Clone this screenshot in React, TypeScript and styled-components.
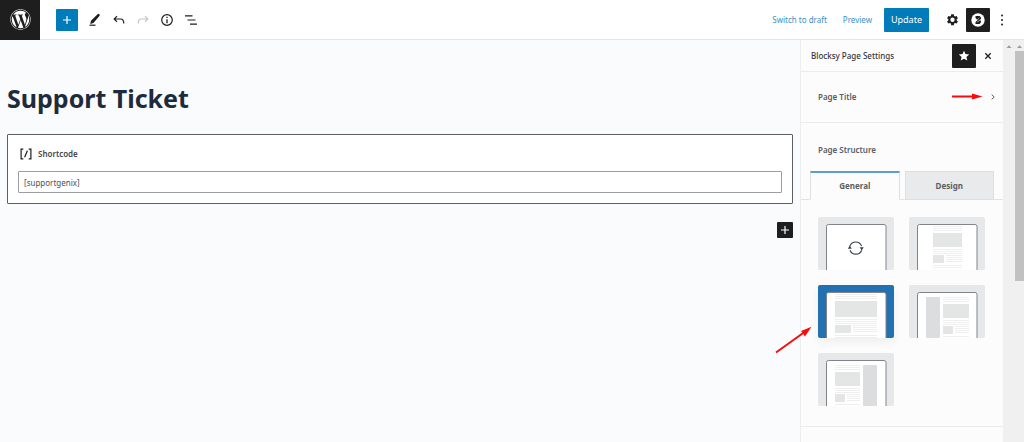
import React, { useState } from "react";
import styled, { createGlobalStyle, css } from "styled-components";
import { FaWordpress } from "react-icons/fa";

const Global = createGlobalStyle`
  * { box-sizing: border-box; }
  body {
    margin: 0;
    background: #fafbfd;
    color: #1e1e1e;
    font-family: "Noto Sans", "Open Sans", sans-serif;
    font-size: 8px;
    line-height: 12px;
  }
  button, input { font: inherit; color: inherit; margin: 0; }
  button { border: 0; padding: 0; background: none; cursor: pointer; }
  svg { display: block; }
`;

const Shell = styled.div`
  display: flex;
  flex-direction: column;
  height: 100vh;
  overflow: hidden;
`;

const TopBar = styled.header`
  display: flex;
  align-items: center;
  flex: none;
  height: 40px;
  padding-right: 10px;
  background: #fff;
  border-bottom: 1px solid #e4e6e9;
`;

const SiteLink = styled.a`
  display: grid;
  place-items: center;
  width: 40px;
  height: 40px;
  margin-right: 16px;
  background: #1e1e1e;
  color: #fff;
`;

const Tools = styled.div`
  display: flex;
  align-items: center;
  gap: 2px;
`;

const Actions = styled.div`
  display: flex;
  align-items: center;
  margin-left: auto;
`;

const IconButton = styled.button<{ $tone?: "blue" | "dark"; $size?: number }>`
  display: grid;
  place-items: center;
  flex: none;
  width: ${(p) => p.$size ?? 22}px;
  height: ${(p) => p.$size ?? 22}px;
  border-radius: 1px;
  color: #1e1e1e;
  ${(p) => p.$tone === "blue" && css`background: #007cba; color: #fff;`}
  ${(p) => p.$tone === "dark" && css`background: #1e1e1e; color: #fff;`}
  &:disabled { color: #c6c6c6; }
`;

const Inserter = styled(IconButton)`
  margin-right: 4px;
`;

const SettingsButton = styled(IconButton)`
  margin-right: 3px;
`;

const TextButton = styled.button`
  margin-right: 16px;
  color: #3d8fc2;
`;

const UpdateButton = styled.button`
  height: 24px;
  padding: 0 7px;
  margin: 0 12px 0 -4px;
  border-radius: 1px;
  background: #007cba;
  color: #fff;
  font-size: 9px;
`;

const Workspace = styled.div`
  display: flex;
  flex: 1;
  min-height: 0;
`;

const Canvas = styled.main`
  flex: 1;
  min-width: 0;
  padding: 39px 7px 0;
`;

const PostTitle = styled.h1`
  margin: 0 0 17px;
  color: #1e2b3c;
  font-size: 25px;
  line-height: 38px;
  font-weight: 700;
`;

const Block = styled.section`
  padding: 11px 10px 10px;
  border: 1px solid #5f6064;
  border-radius: 1px;
  background: #fff;
`;

const BlockLabel = styled.label`
  display: flex;
  align-items: center;
  gap: 6px;
  height: 15px;
  margin-bottom: 10px;
  padding-left: 2px;
  color: #44474c;
  font-weight: 600;
`;

const BlockInput = styled.input`
  display: block;
  width: 100%;
  height: 22px;
  padding: 1px 5px 0;
  border: 1px solid #9b9da0;
  border-radius: 1px;
  background: #fff;
  color: #4c4f54;
`;

const Appender = styled.div`
  display: flex;
  justify-content: flex-end;
  padding-top: 18px;
`;

const Panel = styled.aside`
  flex: none;
  width: 203px;
  background: #fcfcfc;
  border-left: 1px solid #eceef0;
  color: #595d63;
  font-weight: 600;
`;

const PanelHeader = styled.div`
  display: flex;
  align-items: center;
  height: 32px;
  padding: 0 9px 0 10px;
  border-bottom: 1px solid #e9ebec;
  color: #33363b;
  font-weight: 500;
`;

const PanelTitle = styled.h2`
  flex: 1;
  margin: 0;
  font-size: inherit;
  font-weight: inherit;
`;

const CloseButton = styled(IconButton)`
  margin-left: 6px;
`;

const OptionRow = styled.button`
  display: flex;
  align-items: center;
  justify-content: space-between;
  width: 100%;
  height: 51px;
  padding: 0 7px 1px 17px;
  border-bottom: 1px solid #e9ebec;
  font-weight: 600;
`;

const Heading = styled.h3`
  margin: 0;
  padding: 21px 17px 15px;
  font-size: inherit;
  font-weight: inherit;
`;

const Tabs = styled.div`
  display: flex;
  gap: 5px;
  padding: 0 9px;
  box-shadow: inset 0 -1px #e1e4e6;
`;

const Tab = styled.button<{ $active: boolean }>`
  flex: 1;
  height: 29px;
  border: 1px solid #dddfe1;
  background: #e8eaec;
  font-weight: 700;
  ${(p) =>
    p.$active &&
    css`
      border-top: 2px solid #5a9fce;
      border-bottom-color: #fcfcfc;
      background: #fcfcfc;
    `}
`;

const Layouts = styled.fieldset`
  display: grid;
  grid-template-columns: 76px 76px;
  gap: 15px;
  margin: 0;
  padding: 17px 17px 20px;
  border: 0;
  border-bottom: 1px solid #e9ebec;
`;

const LayoutTile = styled.label<{ $selected: boolean }>`
  display: block;
  position: relative;
  height: 53px;
  border-radius: 2px;
  overflow: hidden;
  background: ${(p) => (p.$selected ? "#2271b1" : "#e7e8ea")};
  box-shadow: ${(p) => (p.$selected ? "0 4px 10px rgba(0, 0, 0, 0.06)" : "none")};
  cursor: pointer;
`;

const HiddenRadio = styled.input`
  position: absolute;
  inset: 0;
  opacity: 0;
`;

const ScrollTrack = styled.div<{ $width: number }>`
  flex: none;
  width: ${(p) => p.$width}px;
  padding-top: 5px;
  background: #f0f0f0;
`;

const ScrollThumb = styled.div`
  height: 58%;
  margin-top: 3px;
  background: #c1c1c1;
`;

const PointerRow = styled.span`
  display: flex;
  align-items: center;
  gap: 7px;
`;

const PointerAnchor = styled.span`
  position: absolute;
  left: -44px;
  top: 40px;
  pointer-events: none;
`;

const TileCell = styled.div`
  position: relative;
`;

const Plus = () => (
  <svg width="10" height="10" viewBox="0 0 10 10" fill="none" stroke="currentColor" strokeWidth="1.2">
    <path d="M5 1v8M1 5h8" />
  </svg>
);

const Pencil = () => (
  <svg width="16" height="16" viewBox="0 0 16 16" fill="currentColor">
    <path d="M10.6 2.200q.9-.9 1.800 0t0 1.800L6.400 10.900 3.200 12l.8-3.200z" />
    <path d="M2.500 12.600h6v1.200h-6z" />
  </svg>
);

const Undo = () => (
  <svg width="14" height="14" viewBox="0 0 14 14" fill="none" stroke="currentColor" strokeWidth="1.200">
    <path d="M5 3.200L2.200 6 5 8.800M2.400 6h6.100q3.300 0 3.300 4.600" />
  </svg>
);

const Redo = () => (
  <svg width="14" height="14" viewBox="0 0 14 14" fill="none" stroke="currentColor" strokeWidth="1.200">
    <path d="M9 3.200L11.800 6 9 8.800M11.600 6H5.500Q2.200 6 2.200 10.600" />
  </svg>
);

const Info = () => (
  <svg width="14" height="14" viewBox="0 0 14 14" fill="none" stroke="currentColor">
    <circle cx="7" cy="7" r="5.300" strokeWidth="1.200" />
    <path d="M7 6.200v4M7 3.800v1.300" strokeWidth="1.300" />
  </svg>
);

const Outline = () => (
  <svg width="14" height="14" viewBox="0 0 14 14" fill="none" stroke="currentColor" strokeWidth="1.200">
    <path d="M1 2.900h7.500M3.500 7h8M6 11.100h7" />
  </svg>
);

const Gear = () => (
  <svg width="13" height="13" viewBox="0 0 24 24" fill="currentColor" fillRule="evenodd">
    <path d="M9.600 2.500h4.800l.6 3 1.700 1 2.900-1 2.400 4.100-2.300 2v1.900l2.300 2-2.400 4.100-2.900-1-1.700 1-.6 3H9.600l-.6-3-1.700-1-2.900 1L2 15.500l2.300-2v-1.900l-2.300-2 2.400-4.100 2.900 1 1.700-1zM12 8.500a4 4 0 100 8 4 4 0 000-8z" />
  </svg>
);

const BlocksyMark = () => (
  <svg width="14" height="14" viewBox="0 0 14 14">
    <circle cx="7" cy="7" r="6.700" fill="#fff" />
    <path d="M4.500 3h4.200l1.500 2-1 1.900 1 2L8.600 11H4.500V9.100l1.900-2.100-1.900-2z" fill="#1e1e1e" />
    <path d="M4.500 8.500L8.300 5M6.200 9L9.600 6.700" stroke="#fff" strokeWidth=".6" />
  </svg>
);

const Dots = () => (
  <svg width="4" height="14" viewBox="0 0 4 14" fill="currentColor">
    <circle cx="2" cy="2.500" r="1" />
    <circle cx="2" cy="7" r="1" />
    <circle cx="2" cy="11.500" r="1" />
  </svg>
);

const Star = () => (
  <svg width="12" height="12" viewBox="0 0 12 12" fill="currentColor">
    <path d="M6 .8l1.500 3.300 3.700.4-2.800 2.400.9 3.700L6 8.700l-3.300 1.900.9-3.700L.8 4.500l3.700-.4z" />
  </svg>
);

const Cross = () => (
  <svg width="8" height="8" viewBox="0 0 8 8" fill="none" stroke="currentColor" strokeWidth="1.300">
    <path d="M1.300 1.300l5.400 5.400M6.700 1.300L1.300 6.700" />
  </svg>
);

const Chevron = () => (
  <svg width="6" height="6" viewBox="0 0 6 6" fill="none" stroke="currentColor">
    <path d="M1.700.6L4.200 3 1.700 5.400" />
  </svg>
);

const ShortcodeIcon = () => (
  <svg width="12" height="12" viewBox="0 0 12 12" fill="none" stroke="#1e1e1e" strokeWidth="1.200">
    <path d="M3.300 1.100H1.100v9.800h2.200M8.700 1.100h2.200v9.800H8.700M7.400 2.700L4.600 9.300" />
  </svg>
);

const ScrollUp = () => (
  <svg width="100%" height="3" viewBox="0 0 6 3">
    <path d="M.5 3L3 .2 5.500 3z" fill="#9b9b9b" />
  </svg>
);

const RightPointer = () => (
  <svg width="31" height="7" viewBox="0 0 31 7" fill="#fa0a0a">
    <path d="M0 2.500h20V.4l10.500 3.100L20 6.600V4.500H0z" />
  </svg>
);

const DiagonalPointer = () => (
  <svg width="40" height="30" viewBox="0 0 40 30" fill="#fa0a0a">
    <path d="M2 27.500L29.500 7.800" stroke="#fa0a0a" strokeWidth="2" />
    <path d="M37.500 1.800L27 5.900l4 5.500z" />
  </svg>
);

type LayoutKind = "inherit" | "narrow" | "normal" | "left" | "right";

const Article = ({ x, w }: { x: number; w: number }) => {
  const hero = w > 35 ? 16 : 14;
  const after = 16 + hero;
  const thumb = Math.round(w * 0.38);
  return (
    <g fill="#e4e5e5">
      {[9, 11, 13].map((y) => (
        <rect key={y} x={x} y={y} width={w} height="1" fill="#efefef" />
      ))}
      <rect x={x} y={16} width={w} height={hero} />
      {[2, 4, 6].map((d) => (
        <rect key={d} x={x} y={after + d} width={w} height="1" fill="#efefef" />
      ))}
      <rect x={x} y={after + 8} width={thumb} height={8} />
      {[8, 10, 12, 14].map((d) => (
        <rect key={d} x={x + thumb + 2} y={after + d} width={w - thumb - 2} height="1" fill="#efefef" />
      ))}
      {[18, 20].map((d) => (
        <rect key={d} x={x} y={after + d} width={w} height="1" fill="#efefef" />
      ))}
    </g>
  );
};

const LayoutArt = ({ kind }: { kind: LayoutKind }) => (
  <svg width="76" height="53" viewBox="0 0 76 53">
    <path d="M8.500 53V9.500q0-2 2-2h55.500q2 0 2 2V53" fill="#fff" stroke="#808489" />
    {kind === "inherit" && (
      <g fill="none" stroke="#3d4147" strokeWidth="1.100">
        <path d="M31.900 29a6.300 6.300 0 0 1 11.700 0M32 33.200a6.300 6.300 0 0 0 11.700 0" />
        <path d="M29.800 31.800l2-3.200 2 3.200zM41.700 30.200l2 3.200 2-3.200z" fill="#3d4147" stroke="none" />
      </g>
    )}
    {kind === "narrow" && <Article x={24} w={29} />}
    {kind === "normal" && <Article x={17} w={42} />}
    {kind === "left" && (
      <>
        <rect x="17" y="12" width="14" height="41" rx="1" fill="#dcddde" />
        <g transform="translate(0 3)"><Article x={34} w={26} /></g>
      </>
    )}
    {kind === "right" && (
      <>
        <g transform="translate(0 3)"><Article x={17} w={25} /></g>
        <rect x="45" y="12" width="14" height="41" rx="1" fill="#dcddde" />
      </>
    )}
  </svg>
);

const layouts: { kind: LayoutKind; label: string }[] = [
  { kind: "inherit", label: "Inherit from customizer" },
  { kind: "narrow", label: "Narrow width" },
  { kind: "normal", label: "Normal width" },
  { kind: "left", label: "Left sidebar" },
  { kind: "right", label: "Right sidebar" },
];

export default function App() {
  const [tab, setTab] = useState("General");
  const [layout, setLayout] = useState<LayoutKind>("normal");
  const [shortcode, setShortcode] = useState("[supportgenix]");

  return (
    <Shell>
      <Global />
      <TopBar>
        <SiteLink href="#" aria-label="View pages">
          <FaWordpress size={21} />
        </SiteLink>
        <Tools>
          <Inserter $tone="blue" aria-label="Add block"><Plus /></Inserter>
          <IconButton aria-label="Tools"><Pencil /></IconButton>
          <IconButton aria-label="Undo"><Undo /></IconButton>
          <IconButton aria-label="Redo" disabled><Redo /></IconButton>
          <IconButton aria-label="Details"><Info /></IconButton>
          <IconButton aria-label="List view"><Outline /></IconButton>
        </Tools>
        <Actions>
          <TextButton>Switch to draft</TextButton>
          <TextButton>Preview</TextButton>
          <UpdateButton>Update</UpdateButton>
          <SettingsButton aria-label="Settings"><Gear /></SettingsButton>
          <IconButton $tone="dark" $size={24} aria-label="Blocksy"><BlocksyMark /></IconButton>
          <IconButton $size={24} aria-label="Options"><Dots /></IconButton>
        </Actions>
      </TopBar>
      <Workspace>
        <Canvas>
          <PostTitle>Support Ticket</PostTitle>
          <Block>
            <BlockLabel htmlFor="shortcode">
              <ShortcodeIcon />
              Shortcode
            </BlockLabel>
            <BlockInput id="shortcode" value={shortcode} onChange={(e) => setShortcode(e.target.value)} />
          </Block>
          <Appender>
            <IconButton $tone="dark" $size={16} aria-label="Add block"><Plus /></IconButton>
          </Appender>
        </Canvas>
        <Panel>
          <PanelHeader>
            <PanelTitle>Blocksy Page Settings</PanelTitle>
            <IconButton $tone="dark" $size={24} aria-label="Pin to toolbar"><Star /></IconButton>
            <CloseButton $size={12} aria-label="Close"><Cross /></CloseButton>
          </PanelHeader>
          <OptionRow>
            Page Title
            <PointerRow>
              <RightPointer />
              <Chevron />
            </PointerRow>
          </OptionRow>
          <Heading>Page Structure</Heading>
          <Tabs role="tablist">
            {["General", "Design"].map((name) => (
              <Tab key={name} role="tab" aria-selected={tab === name} $active={tab === name} onClick={() => setTab(name)}>
                {name}
              </Tab>
            ))}
          </Tabs>
          <Layouts aria-label="Page Structure">
            {layouts.map(({ kind, label }) => (
              <TileCell key={kind}>
                <LayoutTile $selected={layout === kind}>
                  <HiddenRadio
                    type="radio"
                    name="layout"
                    aria-label={label}
                    checked={layout === kind}
                    onChange={() => setLayout(kind)}
                  />
                  <LayoutArt kind={kind} />
                </LayoutTile>
                {kind === "normal" && (
                  <PointerAnchor><DiagonalPointer /></PointerAnchor>
                )}
              </TileCell>
            ))}
          </Layouts>
        </Panel>
        <ScrollTrack $width={12}><ScrollUp /></ScrollTrack>
        <ScrollTrack $width={9}>
          <ScrollUp />
          <ScrollThumb />
        </ScrollTrack>
      </Workspace>
    </Shell>
  );
}
